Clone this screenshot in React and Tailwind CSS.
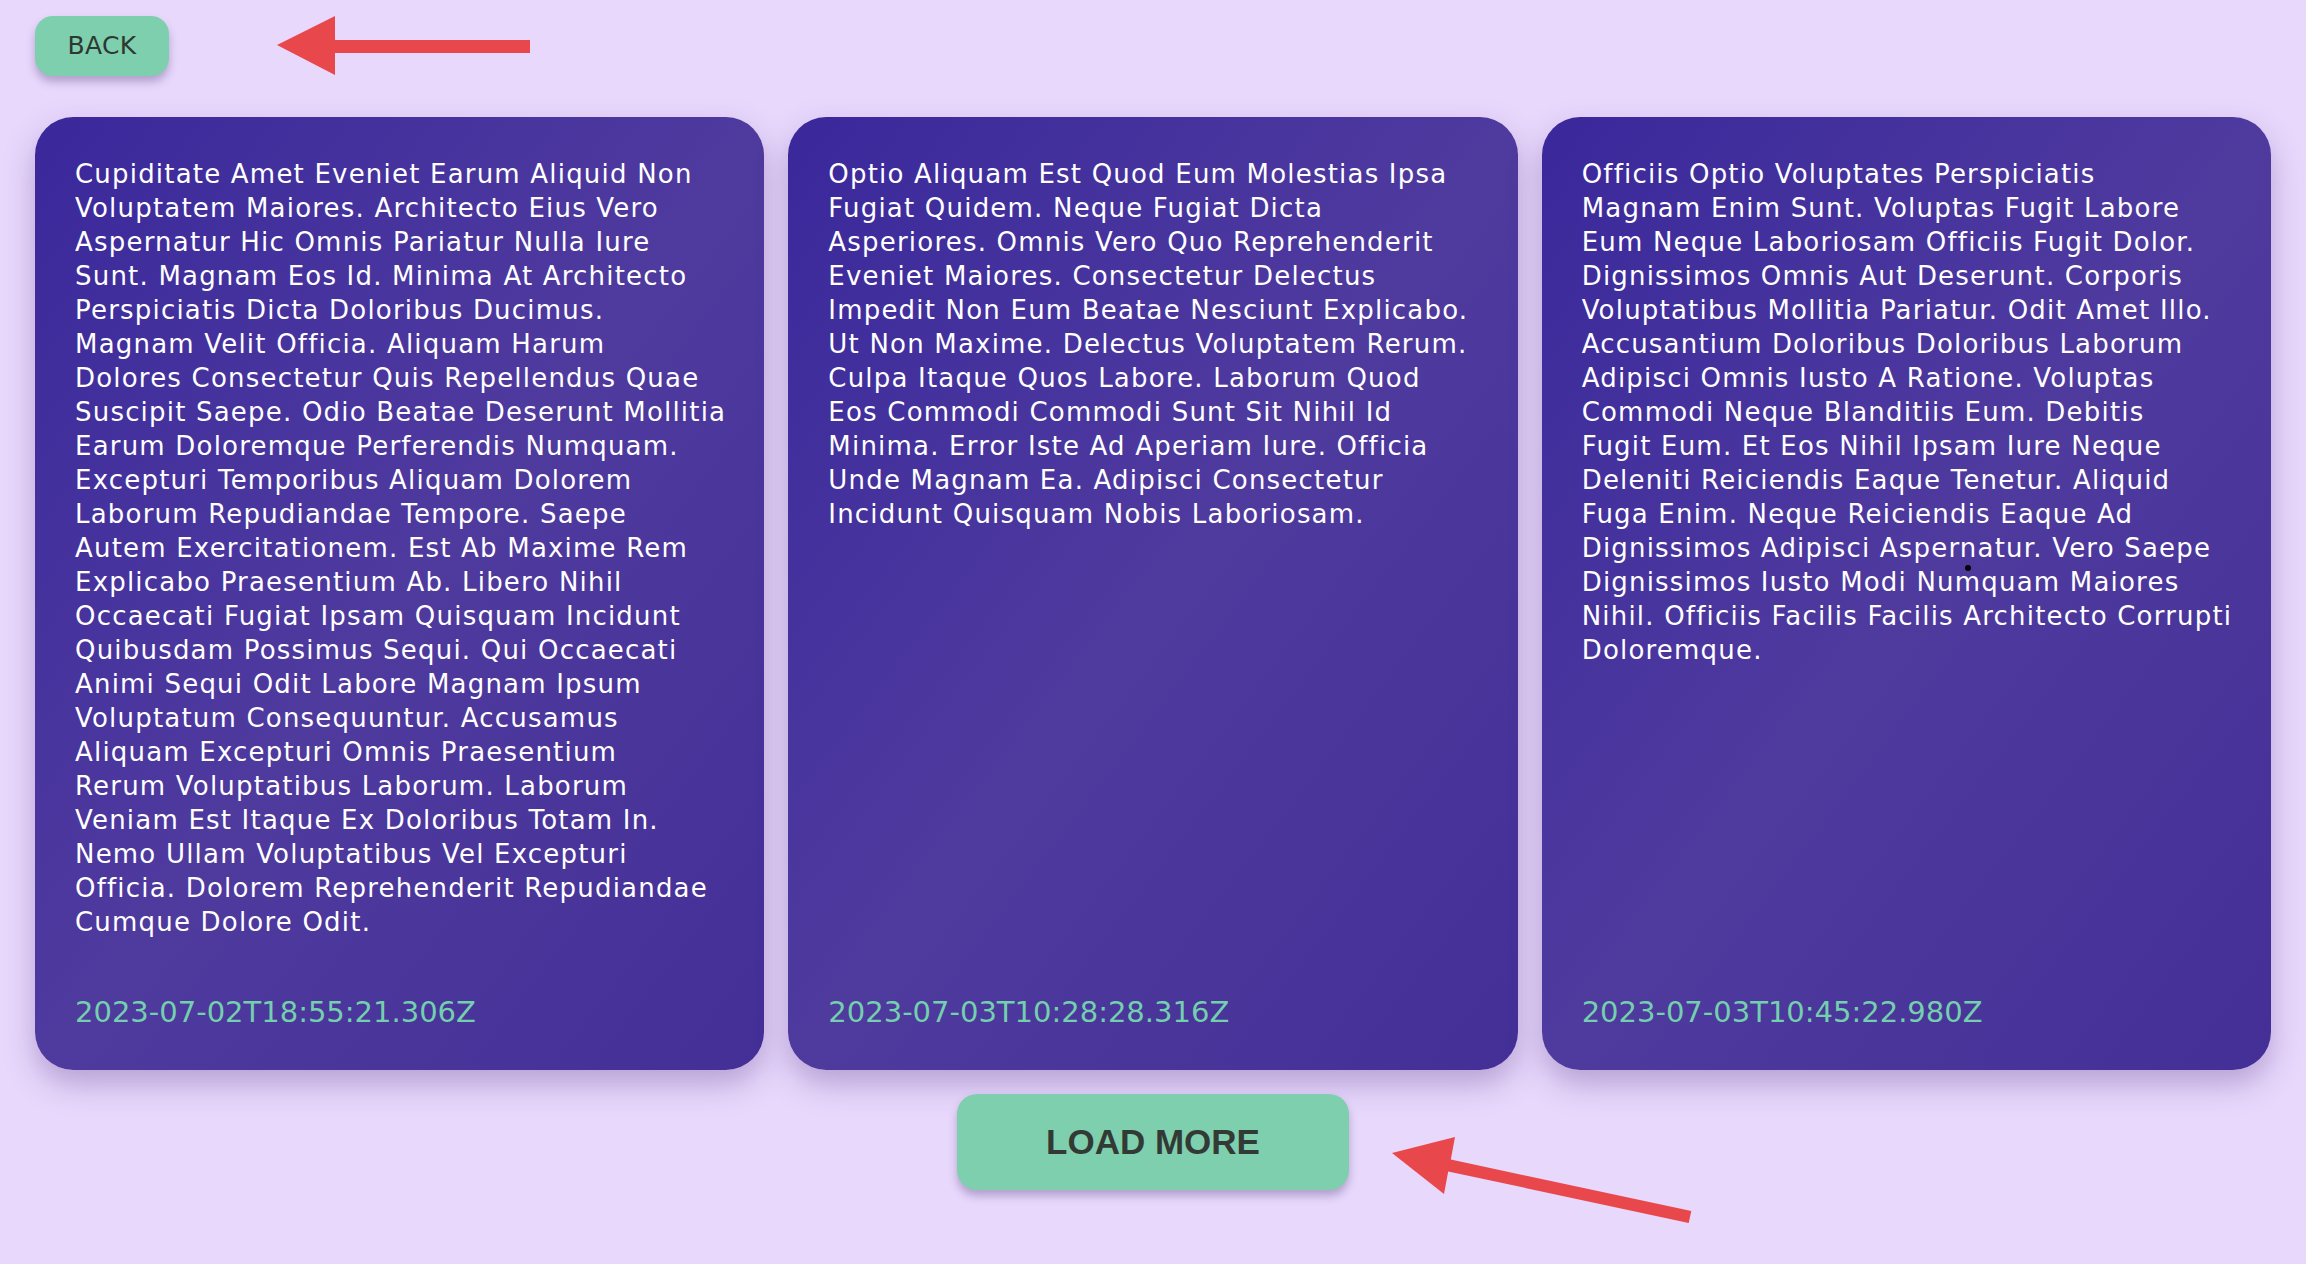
import React from 'react';

// Posts shown in the grid, lines kept as they wrap in the design
const posts = [
  {
    id: 'p1',
    lines: [
      'Cupiditate Amet Eveniet Earum Aliquid Non',
      'Voluptatem Maiores. Architecto Eius Vero',
      'Aspernatur Hic Omnis Pariatur Nulla Iure',
      'Sunt. Magnam Eos Id. Minima At Architecto',
      'Perspiciatis Dicta Doloribus Ducimus.',
      'Magnam Velit Officia. Aliquam Harum',
      'Dolores Consectetur Quis Repellendus Quae',
      'Suscipit Saepe. Odio Beatae Deserunt Mollitia',
      'Earum Doloremque Perferendis Numquam.',
      'Excepturi Temporibus Aliquam Dolorem',
      'Laborum Repudiandae Tempore. Saepe',
      'Autem Exercitationem. Est Ab Maxime Rem',
      'Explicabo Praesentium Ab. Libero Nihil',
      'Occaecati Fugiat Ipsam Quisquam Incidunt',
      'Quibusdam Possimus Sequi. Qui Occaecati',
      'Animi Sequi Odit Labore Magnam Ipsum',
      'Voluptatum Consequuntur. Accusamus',
      'Aliquam Excepturi Omnis Praesentium',
      'Rerum Voluptatibus Laborum. Laborum',
      'Veniam Est Itaque Ex Doloribus Totam In.',
      'Nemo Ullam Voluptatibus Vel Excepturi',
      'Officia. Dolorem Reprehenderit Repudiandae',
      'Cumque Dolore Odit.',
    ],
    createdAt: '2023-07-02T18:55:21.306Z',
  },
  {
    id: 'p2',
    lines: [
      'Optio Aliquam Est Quod Eum Molestias Ipsa',
      'Fugiat Quidem. Neque Fugiat Dicta',
      'Asperiores. Omnis Vero Quo Reprehenderit',
      'Eveniet Maiores. Consectetur Delectus',
      'Impedit Non Eum Beatae Nesciunt Explicabo.',
      'Ut Non Maxime. Delectus Voluptatem Rerum.',
      'Culpa Itaque Quos Labore. Laborum Quod',
      'Eos Commodi Commodi Sunt Sit Nihil Id',
      'Minima. Error Iste Ad Aperiam Iure. Officia',
      'Unde Magnam Ea. Adipisci Consectetur',
      'Incidunt Quisquam Nobis Laboriosam.',
    ],
    createdAt: '2023-07-03T10:28:28.316Z',
  },
  {
    id: 'p3',
    lines: [
      'Officiis Optio Voluptates Perspiciatis',
      'Magnam Enim Sunt. Voluptas Fugit Labore',
      'Eum Neque Laboriosam Officiis Fugit Dolor.',
      'Dignissimos Omnis Aut Deserunt. Corporis',
      'Voluptatibus Mollitia Pariatur. Odit Amet Illo.',
      'Accusantium Doloribus Doloribus Laborum',
      'Adipisci Omnis Iusto A Ratione. Voluptas',
      'Commodi Neque Blanditiis Eum. Debitis',
      'Fugit Eum. Et Eos Nihil Ipsam Iure Neque',
      'Deleniti Reiciendis Eaque Tenetur. Aliquid',
      'Fuga Enim. Neque Reiciendis Eaque Ad',
      'Dignissimos Adipisci Aspernatur. Vero Saepe',
      'Dignissimos Iusto Modi Numquam Maiores',
      'Nihil. Officiis Facilis Facilis Architecto Corrupti',
      'Doloremque.',
    ],
    createdAt: '2023-07-03T10:45:22.980Z',
  },
];

function PostCard({ post }) {
  return (
    <div className="flex flex-col rounded-[38px] bg-linear-to-br from-[#3a289c] via-[#4f3a9e] to-[#442f97] px-10 pt-10 pb-10 shadow-[0_14px_30px_rgba(90,60,140,0.35)]">
      <div className="flex-1 text-[26px] leading-[34px] tracking-[1.2px] text-white">
        {post.lines.map((line, idx) => (
          <div key={`${post.id}-line-${idx}`} className="whitespace-nowrap">
            {line}
          </div>
        ))}
      </div>
      <div className="mt-[55px] text-[29px] leading-[36px] text-[#74cfae]">{post.createdAt}</div>
    </div>
  );
}

export default function App() {
  return (
    <div className="relative min-h-screen overflow-hidden bg-[#e8d8fc] px-[35px] pt-4 font-['DejaVu_Sans',sans-serif]">
      <button className="h-[60px] w-[134px] rounded-[18px] bg-[#7ecfae] text-[25px] tracking-[0.3px] text-[#2e3833] shadow-[0_6px_8px_rgba(80,60,120,0.35)]">
        BACK
      </button>

      <div className="mt-[41px] grid grid-cols-3 gap-6">
        {posts.map((post) => (
          <PostCard key={post.id} post={post} />
        ))}
      </div>

      <div className="mt-6 flex justify-center">
        <button className="h-[96px] w-[392px] rounded-[20px] bg-[#7ecfae] font-['Liberation_Sans',Arial,sans-serif] text-[35px] font-bold text-[#333a36] shadow-[0_6px_8px_rgba(80,60,120,0.35)]">
          LOAD MORE
        </button>
      </div>

      {/* annotation arrows */}
      <svg
        className="pointer-events-none absolute top-0 left-0"
        width="2306"
        height="1264"
        viewBox="0 0 2306 1264"
      >
        <polygon points="277,45 335,16 335,40 530,40 530,53 335,53 335,75" fill="#e8474b" />
        <polygon
          points="1392,1153 1455,1137 1450.8,1159.6 1691.3,1211.1 1688.7,1222.9 1448.2,1171.4 1444,1194"
          fill="#e8474b"
        />
      </svg>

      {/* stray cursor dot */}
      <div className="absolute top-[565px] left-[1965px] h-[6px] w-[6px] rounded-full bg-black" />
    </div>
  );
}
